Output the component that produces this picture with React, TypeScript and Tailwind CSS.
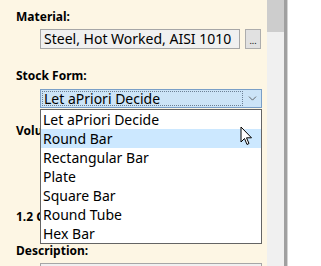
import { ChevronDown } from "lucide-react";

const options = [
  "Let aPriori Decide",
  "Round Bar",
  "Rectangular Bar",
  "Plate",
  "Square Bar",
  "Round Tube",
  "Hex Bar",
];

export default function App() {
  return (
    <div
      className="flex h-[266px] w-[321px] overflow-hidden bg-white text-[14px] text-black"
      style={{ fontFamily: '"Noto Sans", "Open Sans", sans-serif' }}
    >
      {/* form panel */}
      <div className="relative w-[267px] shrink-0 bg-[#fdf6e4]">
        <div className="flex flex-col pl-4 pt-[7px]">
          <div className="h-[20px] text-[12px] font-bold leading-[20px]">Material:</div>
          <div className="mt-[2px] flex items-center gap-[5px] pl-6">
            <div className="h-[20px] w-[200px] border border-[#a6a6a6] bg-[#f0f0f0] pl-[3px] leading-[18px]">
              Steel, Hot Worked, AISI 1010
            </div>
            <div className="flex h-[20px] w-[16px] items-end justify-center border border-[#adadad] bg-[#e1e1e1] pb-[3px] text-[9px] leading-none">
              ...
            </div>
          </div>
          <div className="mt-[17px] h-[20px] text-[12px] font-bold leading-[20px]">Stock Form:</div>
          <div className="mt-[3px] ml-6 flex h-[19px] w-[222px] border border-[#7a9fc7] bg-[#cce4f7]">
            <div className="m-[1px] flex-1 border border-dotted border-[#6d8196] pl-[1px] leading-[13px]">
              Let aPriori Decide
            </div>
            <div className="flex w-[17px] items-center justify-center">
              <ChevronDown size={13} strokeWidth={1.4} className="text-[#404040]" />
            </div>
          </div>
          <div className="mt-[13px] h-[20px] text-[12px] font-bold leading-[20px]">Volume</div>
          <div className="mt-[66px] h-[20px] text-[12px] font-bold leading-[20px]">1.2 Geometry</div>
          <div className="mt-[14px] h-[20px] text-[12px] font-bold leading-[20px]">Description:</div>
          <div className="mt-[2px] ml-6 h-[20px] w-[222px] border border-[#a6a6a6] bg-[#f0f0f0]" />
        </div>

        {/* open dropdown list */}
        <div className="absolute left-[40px] top-[109px] w-[222px] border border-[#646464] bg-white">
          {options.map((o, i) => (
            <div
              key={o}
              className={
                "h-[19px] pl-[2px] leading-[20px] " + (i === 1 ? "bg-[#cce8ff]" : "")
              }
            >
              {o}
            </div>
          ))}
        </div>

        {/* mouse pointer */}
        <svg
          className="absolute left-[240px] top-[126px]"
          width="13"
          height="21"
          viewBox="0 0 13 21"
        >
          <path
            d="M1 1 L1 16 L4.5 12.5 L7 18.5 L9 17.5 L6.5 11.8 L11.5 11.8 Z"
            fill="white"
            stroke="black"
            strokeWidth="1"
            strokeLinejoin="round"
          />
        </svg>
      </div>

      {/* scrollbar */}
      <div className="flex w-[17px] shrink-0 flex-col bg-[#f0f0f0]">
        <div className="h-[32px] bg-[#cdcdcd]" />
      </div>
      <div className="w-[3px] shrink-0 bg-[#a0a0a0]" />
      <div className="w-[1px] shrink-0 bg-[#d4d4d4]" />
      <div className="flex-1 bg-white" />
    </div>
  );
}
